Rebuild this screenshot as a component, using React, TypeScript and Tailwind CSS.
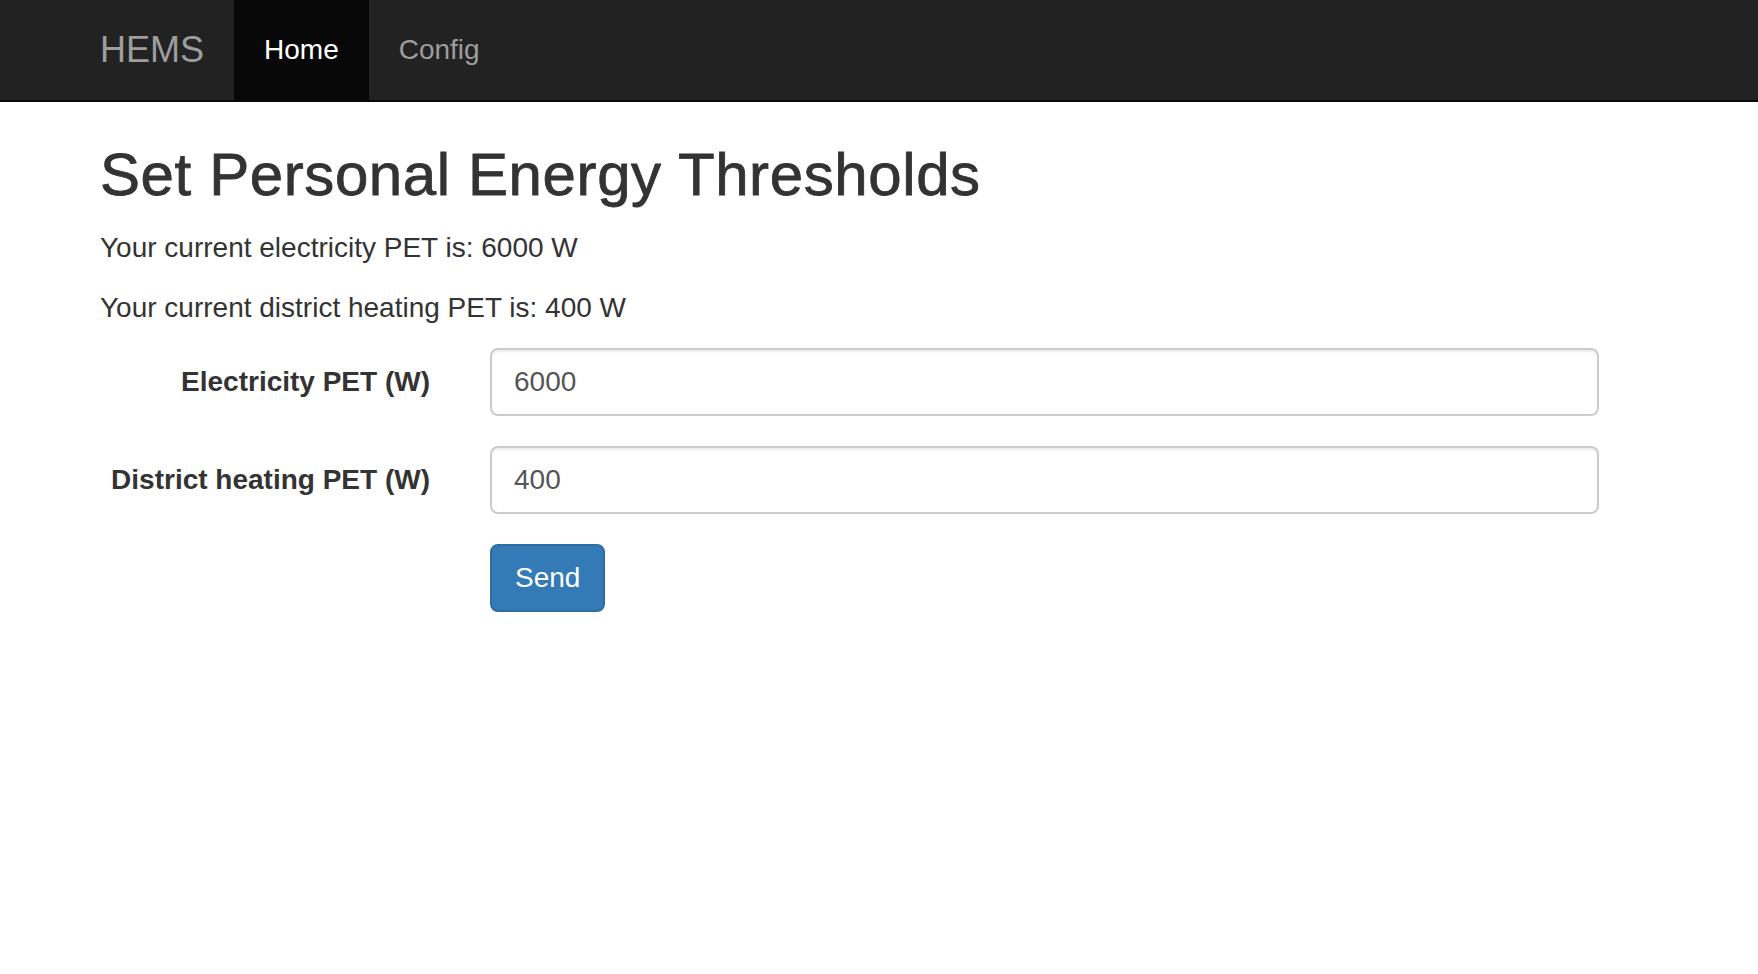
import { useState } from "react";

const font = { fontFamily: '"Liberation Sans", Arial, Helvetica, sans-serif' };

function NavBar() {
  return (
    <nav className="h-[102px] bg-[#222] border-b-2 border-[#080808]">
      <div className="flex pl-[100px]">
        <a className="-ml-[30px] px-[30px] py-[30px] text-[36px] leading-[40px] text-[#9d9d9d]">HEMS</a>
        <a className="px-[30px] py-[30px] text-[28px] leading-[40px] text-white bg-[#080808]">Home</a>
        <a className="px-[30px] py-[30px] text-[28px] leading-[40px] text-[#9d9d9d]">Config</a>
      </div>
    </nav>
  );
}

function Field({ label, value, onChange }: { label: string; value: string; onChange: (v: string) => void }) {
  return (
    <div className="flex mb-[30px]">
      <label className="w-[390px] shrink-0 pr-[30px] pt-[14px] text-right font-bold text-[28px] leading-[40px]">
        {label}
      </label>
      <div className="w-[1139px] shrink-0 pl-[30px]">
        <input
          value={value}
          onChange={(e) => onChange(e.target.value)}
          className="w-full h-[68px] px-[22px] py-[12px] border-2 border-[#ccc] rounded-[8px] text-[28px] leading-[40px] text-[#555] shadow-[inset_0_2px_2px_rgba(0,0,0,0.075)] outline-none"
          style={font}
        />
      </div>
    </div>
  );
}

export default function App() {
  const [elec, setElec] = useState("6000");
  const [heat, setHeat] = useState("400");

  return (
    <div className="min-h-screen bg-white text-[#333]" style={font}>
      <NavBar />
      <div className="pl-[100px] w-[1600px]">
        <h2 className="mt-[40px] mb-[20px] text-[60px] leading-[66px] tracking-[0.6px] [-webkit-text-stroke:0.8px_#333]">
          Set Personal Energy Thresholds
        </h2>
        <p className="mb-[20px] text-[28px] leading-[40px]">Your current electricity PET is: 6000 W</p>
        <p className="mb-[20px] text-[28px] leading-[40px]">Your current district heating PET is: 400 W</p>
        <form onSubmit={(e) => e.preventDefault()} className="-ml-[30px]">
          <Field label="Electricity PET (W)" value={elec} onChange={setElec} />
          <Field label="District heating PET (W)" value={heat} onChange={setHeat} />
          <div className="flex pl-[420px]">
            <button
              type="submit"
              className="h-[68px] px-[23px] border-2 border-[#2e6da4] rounded-[8px] bg-[#337ab7] text-white text-[28px] leading-[40px]"
            >
              Send
            </button>
          </div>
        </form>
      </div>
    </div>
  );
}
